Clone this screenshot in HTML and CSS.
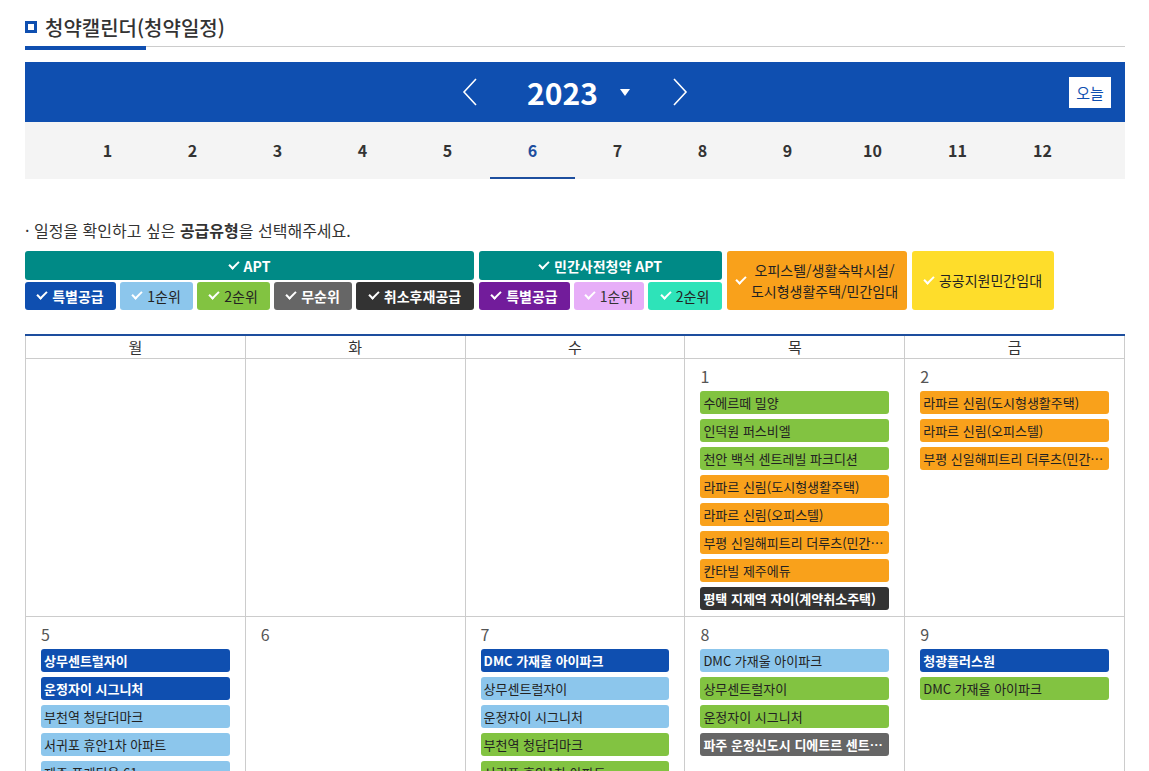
FILE: index.html
```html
<!DOCTYPE html>
<html lang="ko">
<head>
    <meta charset="UTF-8">
    <meta name="viewport" content="width=device-width, initial-scale=1.0">
    <title>청약캘린더</title>
    <link rel="stylesheet" href="styles.css">
</head>
<body>
    <div class="wrap">
        <h2 class="title"><span class="title-icon"></span>청약캘린더(청약일정)</h2>
        <div class="title-line"><div class="title-bar"></div></div>

        <div class="year-bar">
            <div></div>
            <div class="year-nav">
                <button class="arrow" aria-label="이전">
                    <svg width="16" height="30" viewBox="0 0 16 30"><polyline points="14,2 2,15 14,28" fill="none" stroke="#fff" stroke-width="1.6"/></svg>
                </button>
                <span class="year">2023</span>
                <span class="caret"></span>
                <button class="arrow" aria-label="다음">
                    <svg width="16" height="30" viewBox="0 0 16 30"><polyline points="2,2 14,15 2,28" fill="none" stroke="#fff" stroke-width="1.6"/></svg>
                </button>
            </div>
            <button class="today">오늘</button>
        </div>
        <ul class="months">
            <li>1</li><li>2</li><li>3</li><li>4</li><li>5</li>
            <li class="on">6</li>
            <li>7</li><li>8</li><li>9</li><li>10</li><li>11</li><li>12</li>
        </ul>

        <p class="guide">· 일정을 확인하고 싶은 <b>공급유형</b>을 선택해주세요.</p>

        <div class="filters">
            <div class="group g-apt">
                <div class="group-head"><i class="chk"></i>APT</div>
                <div class="group-sub">
                    <span class="fbtn c-blue w91"><i class="chk"></i>특별공급</span>
                    <span class="fbtn c-sky w73"><i class="chk"></i>1순위</span>
                    <span class="fbtn c-green w73"><i class="chk"></i>2순위</span>
                    <span class="fbtn c-gray w78"><i class="chk"></i>무순위</span>
                    <span class="fbtn c-dark w118"><i class="chk"></i>취소후재공급</span>
                </div>
            </div>
            <div class="group g-pre">
                <div class="group-head"><i class="chk"></i>민간사전청약 APT</div>
                <div class="group-sub">
                    <span class="fbtn c-purple w91"><i class="chk"></i>특별공급</span>
                    <span class="fbtn c-pink w70"><i class="chk"></i>1순위</span>
                    <span class="fbtn c-mint w74"><i class="chk"></i>2순위</span>
                </div>
            </div>
            <div class="fbig c-orange w180"><i class="chk"></i><span>오피스텔/생활숙박시설/<br>도시형생활주택/민간임대</span></div>
            <div class="fbig c-yellow w142"><i class="chk"></i>공공지원민간임대</div>
        </div>

        <table class="cal">
            <thead>
                <tr><th>월</th><th>화</th><th>수</th><th>목</th><th>금</th></tr>
            </thead>
            <tbody>
                <tr>
                    <td></td>
                    <td></td>
                    <td></td>
                    <td>
                        <div class="day">1</div>
                        <a class="ev c-green">수에르떼 밀양</a>
                        <a class="ev c-green">인덕원 퍼스비엘</a>
                        <a class="ev c-green">천안 백석 센트레빌 파크디션</a>
                        <a class="ev c-orange">라파르 신림(도시형생활주택)</a>
                        <a class="ev c-orange">라파르 신림(오피스텔)</a>
                        <a class="ev c-orange">부평 신일해피트리 더루츠(민간임대)</a>
                        <a class="ev c-orange">칸타빌 제주에듀</a>
                        <a class="ev c-dark">평택 지제역 자이(계약취소주택)</a>
                    </td>
                    <td>
                        <div class="day">2</div>
                        <a class="ev c-orange">라파르 신림(도시형생활주택)</a>
                        <a class="ev c-orange">라파르 신림(오피스텔)</a>
                        <a class="ev c-orange">부평 신일해피트리 더루츠(민간임대)</a>
                    </td>
                </tr>
                <tr>
                    <td>
                        <div class="day">5</div>
                        <a class="ev c-blue">상무센트럴자이</a>
                        <a class="ev c-blue">운정자이 시그니처</a>
                        <a class="ev c-sky">부천역 청담더마크</a>
                        <a class="ev c-sky">서귀포 휴안1차 아파트</a>
                        <a class="ev c-sky">제주 퓨게티움 61</a>
                        <a class="ev c-sky">DMC 가재울 아이파크</a>
                    </td>
                    <td>
                        <div class="day">6</div>
                    </td>
                    <td>
                        <div class="day">7</div>
                        <a class="ev c-blue">DMC 가재울 아이파크</a>
                        <a class="ev c-sky">상무센트럴자이</a>
                        <a class="ev c-sky">운정자이 시그니처</a>
                        <a class="ev c-green">부천역 청담더마크</a>
                        <a class="ev c-green">서귀포 휴안1차 아파트</a>
                    </td>
                    <td>
                        <div class="day">8</div>
                        <a class="ev c-sky">DMC 가재울 아이파크</a>
                        <a class="ev c-green">상무센트럴자이</a>
                        <a class="ev c-green">운정자이 시그니처</a>
                        <a class="ev c-gray">파주 운정신도시 디에트르 센트럴시티(무순위)</a>
                    </td>
                    <td>
                        <div class="day">9</div>
                        <a class="ev c-blue">청광플러스원</a>
                        <a class="ev c-green">DMC 가재울 아이파크</a>
                    </td>
                </tr>
                <tr>
                    <td><div class="day">12</div></td>
                    <td><div class="day">13</div></td>
                    <td><div class="day">14</div></td>
                    <td><div class="day">15</div></td>
                    <td><div class="day">16</div></td>
                </tr>
            </tbody>
        </table>
    </div>
</body>
</html>
```

FILE: styles.css
```css
body {
    margin: 0;
    background: #fff;
    color: #333;
    font-family: "Noto Sans CJK KR", "Noto Sans", sans-serif;
}
.wrap {
    width: 1100px;
    margin-left: 25px;
    padding-top: 12px;
}
.title {
    display: flex;
    align-items: center;
    margin: 0;
    height: 30px;
    font-size: 20px;
    font-weight: 500;
    color: #333;
}
.title-icon {
    width: 12px;
    height: 12px;
    box-sizing: border-box;
    border: 3px solid #0f4fb0;
    margin-right: 8px;
}
.title-line {
    margin-top: 6px;
    height: 1px;
    background: #cccccc;
}
.title-bar {
    width: 121px;
    height: 4px;
    margin-top: -2px;
    background: #0f4fb0;
}

/* year */
.year-bar {
    margin-top: 15px;
    height: 60px;
    background: #0f4fb0;
    display: grid;
    grid-template-columns: 1fr auto 1fr;
    align-items: center;
}
.year-nav {
    display: flex;
    align-items: center;
}
.arrow {
    background: none;
    border: none;
    padding: 0;
    width: 16px;
    height: 30px;
    cursor: pointer;
}
.arrow svg {
    display: block;
}
.year {
    margin-left: 49px;
    color: #fff;
    font-size: 30px;
    font-weight: bold;
    line-height: 36px;
}
.caret {
    margin-left: 22px;
    margin-right: 42px;
    width: 0;
    height: 0;
    border-left: 5.5px solid transparent;
    border-right: 5.5px solid transparent;
    border-top: 7px solid #fff;
}
.today {
    justify-self: end;
    margin-right: 14px;
    width: 42px;
    height: 31px;
    padding: 0;
    border: none;
    background: #fff;
    color: #0f4fb0;
    font-family: inherit;
    font-size: 15px;
    cursor: pointer;
}
.months {
    list-style: none;
    margin: 0;
    padding: 0;
    height: 57px;
    background: #f4f4f4;
    display: flex;
    justify-content: center;
}
.months li {
    width: 85px;
    box-sizing: border-box;
    text-align: center;
    line-height: 57px;
    font-size: 16px;
    font-weight: bold;
    color: #333;
    cursor: pointer;
}
.months li.on {
    color: #1d4e9e;
    border-bottom: 2px solid #1d4e9e;
}

.guide {
    margin: 40px 0 0;
    font-size: 16px;
    line-height: 22px;
    color: #333;
}

/* filter buttons */
.filters {
    display: flex;
    gap: 5px;
    margin-top: 10px;
    height: 59px;
}
.group {
    display: flex;
    flex-direction: column;
    gap: 2px;
}
.g-apt { width: 449px; }
.g-pre { width: 243px; }
.group-head {
    height: 29px;
    background: #008a86;
    border-radius: 3px;
    color: #fff;
    font-size: 14px;
    font-weight: bold;
    display: flex;
    align-items: center;
    justify-content: center;
}
.group-sub {
    display: flex;
    gap: 4px;
}
.fbtn {
    height: 28px;
    border-radius: 3px;
    font-size: 14px;
    display: flex;
    align-items: center;
    justify-content: center;
}
.fbig {
    height: 59px;
    border-radius: 3px;
    font-size: 14px;
    line-height: 21px;
    display: flex;
    align-items: center;
    justify-content: center;
    text-align: center;
}
.chk {
    display: inline-block;
    width: 8px;
    height: 4px;
    border-left: 2.4px solid #fff;
    border-bottom: 2.4px solid #fff;
    transform: rotate(-45deg);
    margin: -4px 5px 0 0;
}
.w70 { width: 70px; }
.w73 { width: 73px; }
.w74 { width: 74px; }
.w78 { width: 78px; }
.w91 { width: 91px; }
.w118 { width: 118px; }
.w142 { width: 142px; }
.w180 { width: 180px; }

.c-blue { background: #0f4fb0; color: #fff; font-weight: bold; }
.c-sky { background: #8cc6ec; color: #222; }
.c-green { background: #82c341; color: #222; }
.c-gray { background: #666666; color: #fff; font-weight: bold; }
.c-dark { background: #333333; color: #fff; font-weight: bold; }
.c-purple { background: #721c9b; color: #fff; font-weight: bold; }
.c-pink { background: #e7aef8; color: #333; }
.c-mint { background: #2ee3b9; color: #222; }
.c-orange { background: #f9a11b; color: #222; }
.c-yellow { background: #fedd2b; color: #222; }

/* calendar */
.cal {
    width: 100%;
    margin-top: 24px;
    border-collapse: collapse;
    table-layout: fixed;
    border-top: 2px solid #1d4e9e;
}
.cal th {
    height: 22px;
    padding: 0;
    border: 1px solid #cccccc;
    border-top: none;
    font-size: 15px;
    font-weight: normal;
    line-height: 22px;
    color: #333;
}
.cal td {
    vertical-align: top;
    border: 1px solid #cccccc;
    padding: 6px 15px 1px 15px;
    height: 250px;
}
.day {
    font-size: 16px;
    line-height: 22px;
    color: #555;
    margin-bottom: 4px;
}
.ev {
    display: block;
    height: 23px;
    line-height: 23px;
    padding: 0 3px;
    margin-bottom: 5px;
    border-radius: 3px;
    font-size: 13px;
    white-space: nowrap;
    overflow: hidden;
    text-overflow: ellipsis;
    cursor: pointer;
}
```
